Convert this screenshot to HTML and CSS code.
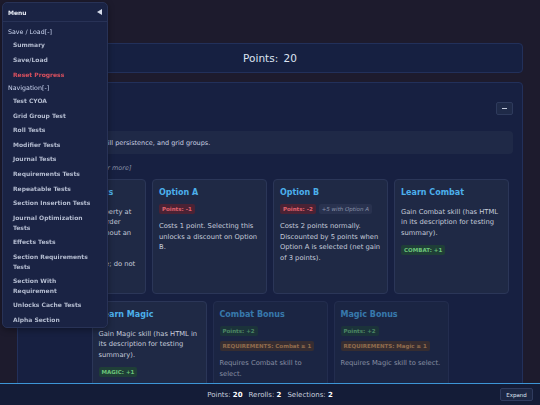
FILE: index.html
```html
<!DOCTYPE html>
<html lang="en">
<head>
<meta charset="utf-8">
<title>CYOA Test</title>
<link rel="stylesheet" href="styles.css">
</head>
<body>
<main class="page">
  <div class="points-bar">Points: <span class="pv">20</span></div>
  <section class="panel">
    <div class="panel-head">
      <h2 class="panel-title">Test CYOA</h2>
      <button class="collapse" type="button"><span class="dash"></span></button>
    </div>
    <div class="panel-desc">Tests points, rerolls, skill persistence, and grid groups.</div>
    <div class="select-hint">[Select one, two, three or more]</div>
    <div class="grid">
      <article class="card">
        <h3 class="card-title">Grid Group Tests</h3>
        <p class="card-desc">Checks that the property at<br>the header and a border<br>and still persists without an<br>explicit save.<br><br>Reroll all of your dice; do not<br>reload.</p>
      </article>
      <article class="card">
        <h3 class="card-title">Option A</h3>
        <div class="badges"><span class="badge red">Points: -1</span></div>
        <p class="card-desc">Costs 1 point. Selecting this unlocks a discount on Option B.</p>
      </article>
      <article class="card">
        <h3 class="card-title">Option B</h3>
        <div class="badges"><span class="badge red">Points: -2</span><span class="badge note">+5 with Option A</span></div>
        <p class="card-desc">Costs 2 points normally. Discounted by 5 points when Option A is selected (net gain of 3 points).</p>
      </article>
      <article class="card">
        <h3 class="card-title">Learn Combat</h3>
        <p class="card-desc">Gain Combat skill (has HTML in its description for testing summary).</p>
        <div class="badges"><span class="badge green">COMBAT: +1</span></div>
      </article>
      <article class="card">
        <h3 class="card-title">Learn Magic</h3>
        <p class="card-desc">Gain Magic skill (has HTML in its description for testing summary).</p>
        <div class="badges"><span class="badge green">MAGIC: +1</span></div>
      </article>
      <article class="card disabled">
        <h3 class="card-title">Combat Bonus</h3>
        <div class="badges"><span class="badge green">Points: +2</span><span class="badge orange">REQUIREMENTS: Combat ≥ 1</span></div>
        <p class="card-desc">Requires Combat skill to select.</p>
      </article>
      <article class="card disabled">
        <h3 class="card-title">Magic Bonus</h3>
        <div class="badges"><span class="badge green">Points: +2</span><span class="badge orange">REQUIREMENTS: Magic ≥ 1</span></div>
        <p class="card-desc">Requires Magic skill to select.</p>
      </article>
    </div>
  </section>
</main>

<nav class="menu">
  <div class="menu-head">
    <span class="menu-title">Menu</span>
    <svg class="menu-arrow" width="5" height="6" viewBox="0 0 5 6"><polygon points="5,0 5,6 0,3" fill="#d6dcea"/></svg>
  </div>
  <div class="menu-body">
    <div class="menu-group">Save / Load[-]</div>
    <div class="menu-item">Summary</div>
    <div class="menu-item">Save/Load</div>
    <div class="menu-item danger">Reset Progress</div>
    <div class="menu-group">Navigation[-]</div>
    <div class="menu-item">Test CYOA</div>
    <div class="menu-item">Grid Group Test</div>
    <div class="menu-item">Roll Tests</div>
    <div class="menu-item">Modifier Tests</div>
    <div class="menu-item">Journal Tests</div>
    <div class="menu-item">Requirements Tests</div>
    <div class="menu-item">Repeatable Tests</div>
    <div class="menu-item">Section Insertion Tests</div>
    <div class="menu-item">Journal Optimization Tests</div>
    <div class="menu-item">Effects Tests</div>
    <div class="menu-item">Section Requirements Tests</div>
    <div class="menu-item">Section With Requirement</div>
    <div class="menu-item">Unlocks Cache Tests</div>
    <div class="menu-item">Alpha Section</div>
  </div>
</nav>

<footer class="statusbar">
  <div class="stats">
    <span>Points: <b>20</b></span>
    <span>Rerolls: <b>2</b></span>
    <span>Selections: <b>2</b></span>
  </div>
  <button class="expand" type="button">Expand</button>
</footer>
</body>
</html>
```

FILE: styles.css
```css
* { box-sizing: border-box; }

body {
  margin: 0;
  background: #1d1b2d;
  font-family: "DejaVu Sans", "Noto Sans", sans-serif;
  color: #c8cfdf;
  overflow: hidden;
}

.page {
  padding: 43px 17px 0;
}

.points-bar {
  height: 30px;
  border: 1px solid #22305a;
  border-radius: 4px;
  background: #162041;
  display: flex;
  align-items: center;
  justify-content: center;
  font-size: 10.5px;
  color: #dde4f2;
  white-space: pre;
}

.pv { margin-left: 2px; }

.panel {
  margin-top: 9px;
  background: #172041;
  border: 1px solid #22305a;
  border-radius: 4px;
  padding: 9px;
}

.panel-head {
  height: 32px;
  display: flex;
  align-items: center;
  justify-content: space-between;
}

.panel-title {
  margin: 0;
  font-size: 10px;
  color: #e6ebf5;
}

.collapse {
  width: 17px;
  height: 13px;
  padding: 0;
  background: #1f2a48;
  border: 1px solid #2e3a5c;
  border-radius: 2px;
  display: flex;
  align-items: center;
  justify-content: center;
}

.dash {
  display: block;
  width: 5px;
  height: 1px;
  background: #c3cadb;
}

.panel-desc {
  margin-top: 7px;
  height: 23px;
  background: #1f2947;
  border-radius: 4px;
  padding: 0 7px;
  display: flex;
  align-items: center;
  font-size: 6.5px;
  color: #c7cee0;
}

.select-hint {
  margin-top: 9px;
  line-height: 10px;
  font-size: 6.5px;
  font-style: italic;
  color: #8a92a8;
}

.grid {
  margin-top: 6px;
  padding: 0 4px;
  display: flex;
  flex-wrap: wrap;
  justify-content: center;
  gap: 7px 6px;
}

.card {
  width: 115px;
  min-height: 115px;
  background: #1f2945;
  border: 1px solid #2b3658;
  border-radius: 4px;
  padding: 7px 6px;
  display: flex;
  flex-direction: column;
  align-items: flex-start;
}

.card.disabled { opacity: 0.62; }

.card-title {
  margin: 0 0 1px;
  font-size: 8px;
  line-height: 12px;
  font-weight: bold;
  color: #4cb0ec;
}

.card-desc {
  margin: 6.5px 0 2.7px;
  font-size: 6.75px;
  line-height: 10.6px;
  color: #c5ccdb;
}

.badges {
  margin: 4px 0 0.5px;
  display: flex;
  flex-wrap: wrap;
  gap: 5px 3px;
}

.badge {
  height: 10px;
  line-height: 10px;
  padding: 0 3px;
  border-radius: 2px;
  font-size: 5.5px;
  font-weight: bold;
  white-space: nowrap;
}

.badge.red { color: #e0626e; background: #4b2234; }
.badge.green { color: #6cc47a; background: #1f3f37; }
.badge.orange { color: #d99a55; background: #493628; }
.badge.note {
  color: #8a93aa;
  background: #29324f;
  font-weight: normal;
  font-style: italic;
}

/* Floating menu */
.menu {
  position: fixed;
  top: 2px;
  left: 2px;
  width: 106px;
  background: #1a2344;
  border: 1px solid #283256;
  border-radius: 5px;
  box-shadow: 0 2px 6px rgba(0, 0, 0, 0.35);
}

.menu-head {
  height: 19px;
  border-bottom: 1px solid #283256;
  padding: 0 5px;
  display: flex;
  align-items: center;
  justify-content: space-between;
}

.menu-title {
  font-size: 6px;
  font-weight: bold;
  color: #e9edf6;
}

.menu-body {
  padding: 4px 0 0;
}

.menu-group {
  padding: 1px 5px;
  line-height: 10px;
  font-size: 6.3px;
  color: #c9d3ee;
}

.menu-item {
  padding: 2.4px 12px 2.4px 10px;
  line-height: 9.8px;
  font-size: 6px;
  font-weight: bold;
  color: #b4bcd0;
}

.menu-item.danger { color: #d9505e; }

/* Bottom status bar */
.statusbar {
  position: fixed;
  left: 0;
  right: 0;
  bottom: 0;
  height: 22px;
  background: #141c37;
  border-top: 1px solid #3d95d6;
  display: grid;
  grid-template-columns: 1fr auto 1fr;
  align-items: center;
  padding: 0 7px;
}

.stats {
  grid-column: 2;
  display: flex;
  gap: 6px;
  font-size: 7px;
  color: #c8cfdf;
}

.stats b { color: #ffffff; }

.expand {
  grid-column: 3;
  justify-self: end;
  width: 33px;
  height: 13px;
  padding: 0;
  font-family: "DejaVu Sans", sans-serif;
  font-size: 5.5px;
  color: #dde3f0;
  background: #1c2643;
  border: 1px solid #2f3b5e;
  border-radius: 2px;
}
```
